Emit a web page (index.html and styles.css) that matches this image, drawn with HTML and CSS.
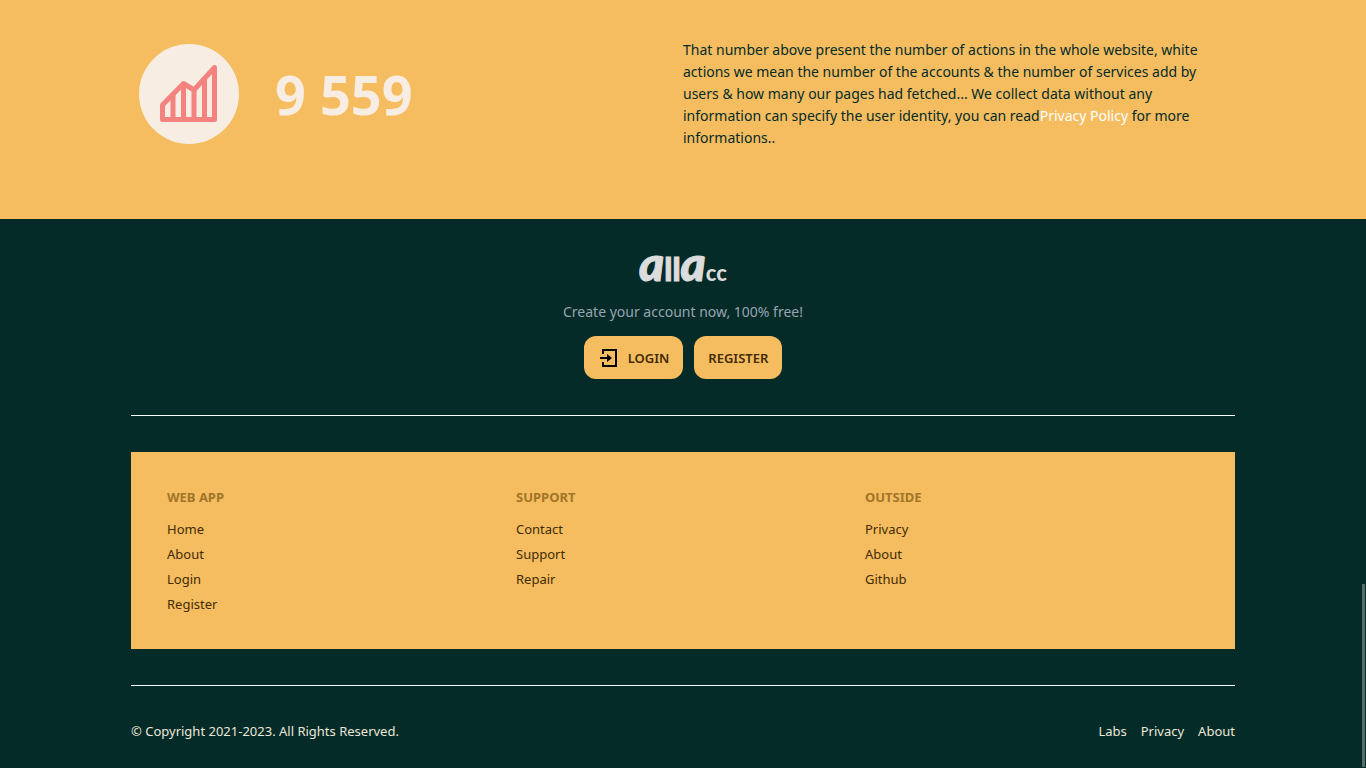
FILE: index.html
```html
<!DOCTYPE html>
<html lang="en">
<head>
<meta charset="utf-8">
<meta name="viewport" content="width=device-width, initial-scale=1">
<title>allacc</title>
<link rel="stylesheet" href="styles.css">
</head>
<body>
<section class="stats">
  <div class="container stats-row">
    <div class="counter">
      <span class="counter-badge">
        <svg class="chart-icon" viewBox="0 0 58 58" fill="none" stroke="#f4827f" stroke-width="5" stroke-linejoin="round" aria-hidden="true">
          <path d="M2.500 54.500V40L23.500 18.500L34 25L54.500 2.500V54.500Z"/>
          <path d="M13 30V54M23.500 19V54M34 25V54M44.500 14V54"/>
        </svg>
      </span>
      <strong class="counter-value">9 559</strong>
    </div>
    <p class="stats-text">That number above present the number of actions in the whole website, white actions we mean the number of the accounts &amp; the number of services add by users &amp; how many our pages had fetched... We collect data without any information can specify the user identity, you can read<a href="#privacy">Privacy Policy</a> for more informations..</p>
  </div>
</section>
<footer class="footer">
  <div class="container">
    <div class="cta">
      <div class="logo"><span>a</span><span class="logo-mid">ll</span><span>a</span><span class="logo-end">cc</span></div>
      <p class="cta-text">Create your account now, 100% free!</p>
      <div class="cta-actions">
        <button class="btn" type="button">
          <svg class="login-icon" viewBox="0 0 18 20" fill="none" stroke="#000" stroke-width="2" aria-hidden="true">
            <path d="M3 6V2H16V18H3V14M0 10H8"/>
            <path d="M7 6L12 10L7 14Z" fill="#000" stroke="none"/>
          </svg>
          LOGIN
        </button>
        <button class="btn" type="button">REGISTER</button>
      </div>
    </div>
    <nav class="links" aria-label="Footer">
      <div class="links-col">
        <h2>WEB APP</h2>
        <a href="#home">Home</a>
        <a href="#about">About</a>
        <a href="#login">Login</a>
        <a href="#register">Register</a>
      </div>
      <div class="links-col">
        <h2>SUPPORT</h2>
        <a href="#contact">Contact</a>
        <a href="#support">Support</a>
        <a href="#repair">Repair</a>
      </div>
      <div class="links-col">
        <h2>OUTSIDE</h2>
        <a href="#privacy">Privacy</a>
        <a href="#about">About</a>
        <a href="#github">Github</a>
      </div>
    </nav>
    <div class="legal">
      <span>© Copyright 2021-2023. All Rights Reserved.</span>
      <nav class="legal-links" aria-label="Legal">
        <a href="#labs">Labs</a>
        <a href="#privacy">Privacy</a>
        <a href="#about">About</a>
      </nav>
    </div>
  </div>
</footer>
<div class="scroll-thumb" aria-hidden="true"></div>
</body>
</html>
```
FILE: styles.css
```css
* {
  box-sizing: border-box;
}

body {
  margin: 0;
  background: #042b28;
  color: #042b28;
  font-family: "Noto Sans", sans-serif;
  font-size: 14px;
  line-height: 22px;
}

a {
  color: inherit;
  text-decoration: none;
}

.container {
  max-width: 1136px;
  margin: 0 auto;
  padding: 0 16px;
}

.stats {
  padding: 39px 0 70px;
  background: #f5bd60;
}

.stats-row {
  display: grid;
  grid-template-columns: 1fr 1fr;
}

.counter {
  display: flex;
  align-items: center;
  gap: 36px;
  padding-left: 8px;
}

.counter-badge {
  display: grid;
  place-items: center;
  width: 100px;
  height: 100px;
  border-radius: 50%;
  background: #f8ede2;
}

.chart-icon {
  width: 58px;
  height: 58px;
}

.counter-value {
  color: #f8ede2;
  font-size: 54px;
  line-height: 72px;
}

.stats-text {
  margin: 0;
  padding-right: 20px;
}

.stats-text a {
  color: #fff;
}

.cta {
  display: flex;
  flex-direction: column;
  align-items: center;
  padding: 32px 0 36px;
  border-bottom: 1px solid #f8ffff;
}

.logo {
  display: flex;
  align-items: baseline;
  height: 36px;
  color: #dcdcdc;
  font-family: Lato, sans-serif;
  font-size: 48px;
  font-style: italic;
  font-weight: 900;
  line-height: 24px;
  -webkit-text-stroke: 1px #dcdcdc;
}

.logo-mid {
  font-size: 32px;
  font-style: normal;
}

.logo-end {
  font-size: 22px;
  font-style: normal;
  -webkit-text-stroke: 0;
}

.cta-text {
  margin: 14px 0 13px;
  color: #98a3b0;
}

.cta-actions {
  display: flex;
  gap: 11px;
}

.btn {
  display: flex;
  align-items: center;
  gap: 10px;
  height: 43px;
  padding: 0 14px;
  border: 0;
  border-radius: 12px;
  background: #f5bd60;
  color: #422b04;
  font: 600 13px/20px "Noto Sans", sans-serif;
}

.login-icon {
  width: 18px;
  height: 20px;
  margin-left: 2px;
}

.links {
  display: grid;
  grid-template-columns: repeat(3, 1fr);
  margin: 36px 0;
  padding: 36px 36px 35px;
  gap: 15px;
  background: #f5bd60;
  color: #422b04;
  font-size: 13px;
  line-height: 19px;
}

.links-col {
  display: flex;
  flex-direction: column;
  align-items: flex-start;
  gap: 6px;
}

.links h2 {
  margin: 0 0 7px;
  color: #a17529;
  font-size: 13px;
  line-height: 19px;
}

.legal {
  display: flex;
  justify-content: space-between;
  padding: 36px 0 26px;
  border-top: 1px solid #f8ffff;
  color: #ebe7d8;
  font-size: 13px;
  line-height: 18px;
}

.legal-links {
  display: flex;
  gap: 14px;
}

.scroll-thumb {
  position: fixed;
  right: 1px;
  bottom: 1px;
  width: 3px;
  height: 183px;
  background: #5b6d69;
}
```
